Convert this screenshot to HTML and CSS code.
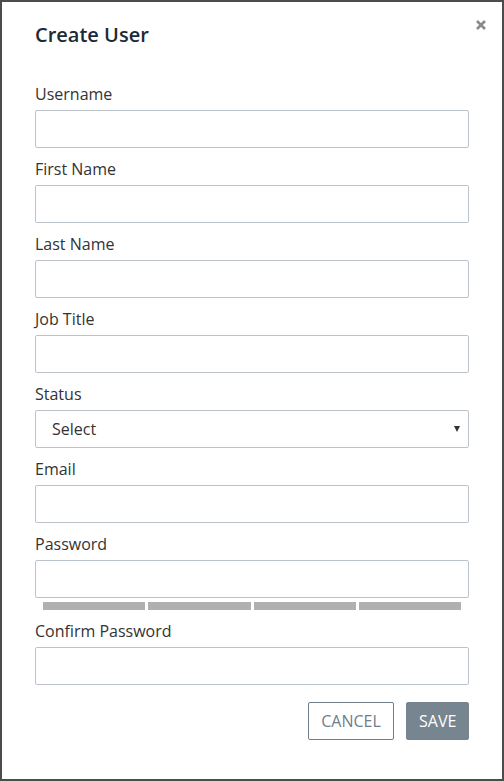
FILE: index.html
```html
<!DOCTYPE html>
<html>
<head>
<meta charset="utf-8">
<link rel="stylesheet" href="styles.css">
</head>
<body>
<div class="dialog">
  <div class="header">
    <h1 class="title">Create User</h1>
    <button class="close" aria-label="Close">
      <svg width="10" height="10" viewBox="0 0 10 10"><path d="M1 1L9 9M9 1L1 9" stroke="#8a8a8a" stroke-width="2.6" stroke-linecap="butt"/></svg>
    </button>
  </div>
  <form class="form">
    <div class="field">
      <label class="label">Username</label>
      <input class="input" type="text">
    </div>
    <div class="field">
      <label class="label">First Name</label>
      <input class="input" type="text">
    </div>
    <div class="field">
      <label class="label">Last Name</label>
      <input class="input" type="text">
    </div>
    <div class="field">
      <label class="label">Job Title</label>
      <input class="input" type="text">
    </div>
    <div class="field">
      <label class="label">Status</label>
      <div class="select-wrap">
        <select class="input select"><option>Select</option></select>
        <span class="arrow"></span>
      </div>
    </div>
    <div class="field">
      <label class="label">Email</label>
      <input class="input" type="text">
    </div>
    <div class="field">
      <label class="label">Password</label>
      <input class="input" type="password">
      <div class="strength">
        <span class="seg"></span><span class="seg"></span><span class="seg"></span><span class="seg"></span>
      </div>
    </div>
    <div class="field">
      <label class="label">Confirm Password</label>
      <input class="input" type="password">
    </div>
    <div class="actions">
      <button type="button" class="btn btn-cancel">CANCEL</button>
      <button type="button" class="btn btn-save">SAVE</button>
    </div>
  </form>
</div>
</body>
</html>
```

FILE: styles.css
```css
html, body {
  margin: 0;
  padding: 0;
}
body {
  background: #2e2e2e;
  font-family: "Open Sans", "Noto Sans", sans-serif;
}
.dialog {
  position: relative;
  box-sizing: border-box;
  width: 504px;
  height: 781px;
  background: #fff;
  border: 2px solid #4c4c4c;
  padding: 0 33px;
}
.header {
  padding-top: 20px;
  height: 62px;
  box-sizing: border-box;
}
.title {
  margin: 0;
  font-size: 20px;
  font-weight: 600;
  line-height: 26px;
  color: #1e2a33;
}
.close {
  position: absolute;
  top: 16px;
  right: 14px;
  width: 14px;
  height: 14px;
  padding: 0;
  border: 0;
  background: none;
  display: flex;
  align-items: center;
  justify-content: center;
}
.form {
  display: flex;
  flex-direction: column;
  padding-top: 19px;
}
.field {
  display: flex;
  flex-direction: column;
  margin-bottom: 10px;
}
.label {
  font-size: 16px;
  line-height: 22px;
  color: #333;
  margin-bottom: 5px;
}
.input {
  box-sizing: border-box;
  width: 100%;
  height: 38px;
  border: 1px solid #bcc3ca;
  border-radius: 2px;
  background: #fff;
  font-family: inherit;
  font-size: 16px;
  color: #333;
  padding: 0 16px;
  margin: 0;
  outline: none;
}
.select-wrap {
  position: relative;
}
.select {
  appearance: none;
  -webkit-appearance: none;
  color: #333;
}
.arrow {
  position: absolute;
  right: 9px;
  top: 16px;
  width: 0;
  height: 0;
  border-left: 3.5px solid transparent;
  border-right: 3.5px solid transparent;
  border-top: 6px solid #333;
}
.strength {
  display: flex;
  gap: 3px;
  padding: 0 8px;
  margin-top: 4px;
}
.seg {
  flex: 1;
  height: 8px;
  background: #b0b0b0;
}
.actions {
  display: flex;
  justify-content: flex-end;
  gap: 12px;
  margin-top: 7px;
}
.btn {
  box-sizing: border-box;
  height: 38px;
  font-family: inherit;
  font-size: 16px;
  border-radius: 2px;
  padding: 0 12px;
  cursor: pointer;
}
.btn-cancel {
  width: 86px;
  background: #fff;
  border: 1px solid #6f7e89;
  color: #6f7e89;
}
.btn-save {
  width: 63px;
  background: #76858f;
  border: 1px solid #76858f;
  color: #fff;
}
```
